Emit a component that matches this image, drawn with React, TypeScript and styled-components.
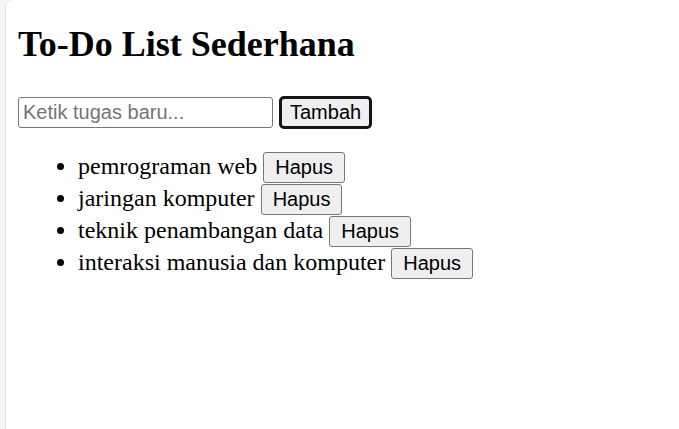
import { useState } from 'react';
import { createGlobalStyle, styled } from 'styled-components';

const GlobalStyle = createGlobalStyle`
  html, body {
    margin: 0;
    padding: 0;
    background-color: #f4f4f4;
  }
  #root {
    min-height: 100vh;
  }
`;

const initialTasks = [
  'pemrograman web',
  'jaringan komputer',
  'teknik penambangan data',
  'interaksi manusia dan komputer'
];

export default function App() {
  const [tasks, setTasks] = useState<string[]>(initialTasks);
  const [text, setText] = useState('');

  const addTask = () => {
    const value = text.trim();
    if (!value) return;
    setTasks([...tasks, value]);
    setText('');
  };

  const removeTask = (index: number) => {
    setTasks(tasks.filter((_, i) => i !== index));
  };

  return (
    <>
      <GlobalStyle />
      <StyledPage>
        <StyledTitle>To-Do List Sederhana</StyledTitle>
        <StyledForm>
          <StyledInput
            type="text"
            placeholder="Ketik tugas baru..."
            value={text}
            onChange={(e) => setText(e.target.value)}
          />
          <StyledAddButton type="button" onClick={addTask}>
            Tambah
          </StyledAddButton>
        </StyledForm>
        <StyledList>
          {tasks.map((task, index) => (
            <StyledItem key={index}>
              {task}{' '}
              <StyledDeleteButton type="button" onClick={() => removeTask(index)}>
                Hapus
              </StyledDeleteButton>
            </StyledItem>
          ))}
        </StyledList>
      </StyledPage>
    </>
  );
}

const StyledPage = styled.main`
  box-sizing: border-box;
  min-height: 100vh;
  margin-left: 5px;
  padding: 24px 12px 0;
  background-color: #ffffff;
  border-left: 1px solid #e4e4e4;
  border-top-left-radius: 8px;
  font-family: 'Liberation Serif', 'Times New Roman', serif;
  color: #000;
`;

const StyledTitle = styled.h1`
  margin: 0 0 32px;
  font-size: 36px;
  line-height: 40px;
  font-weight: bold;
`;

const StyledForm = styled.div`
  display: flex;
  align-items: center;
  gap: 6px;
`;

const StyledInput = styled.input`
  box-sizing: border-box;
  width: 255px;
  height: 31px;
  padding: 0 4px;
  border: 1px solid #767676;
  border-radius: 3px;
  font-family: 'Liberation Sans', Arial, sans-serif;
  font-size: 20px;
  color: #000;
  background: #fff;

  &::placeholder {
    color: #757575;
  }
`;

const StyledButton = styled.button`
  box-sizing: border-box;
  font-family: 'Liberation Sans', Arial, sans-serif;
  font-size: 20px;
  line-height: 23px;
  color: #000;
  background-color: #efefef;
  cursor: pointer;
`;

const StyledAddButton = styled(StyledButton)`
  height: 33px;
  padding: 2px 8px;
  border: 3px solid #151515;
  border-radius: 5px;
`;

const StyledList = styled.ul`
  margin: 23px 0 0;
  padding-left: 60px;
  font-size: 24px;
`;

const StyledItem = styled.li`
  height: 32px;
`;

const StyledDeleteButton = styled(StyledButton)`
  height: 31px;
  padding: 3px 11px;
  border: 1px solid #767676;
  border-radius: 3px;
`;
